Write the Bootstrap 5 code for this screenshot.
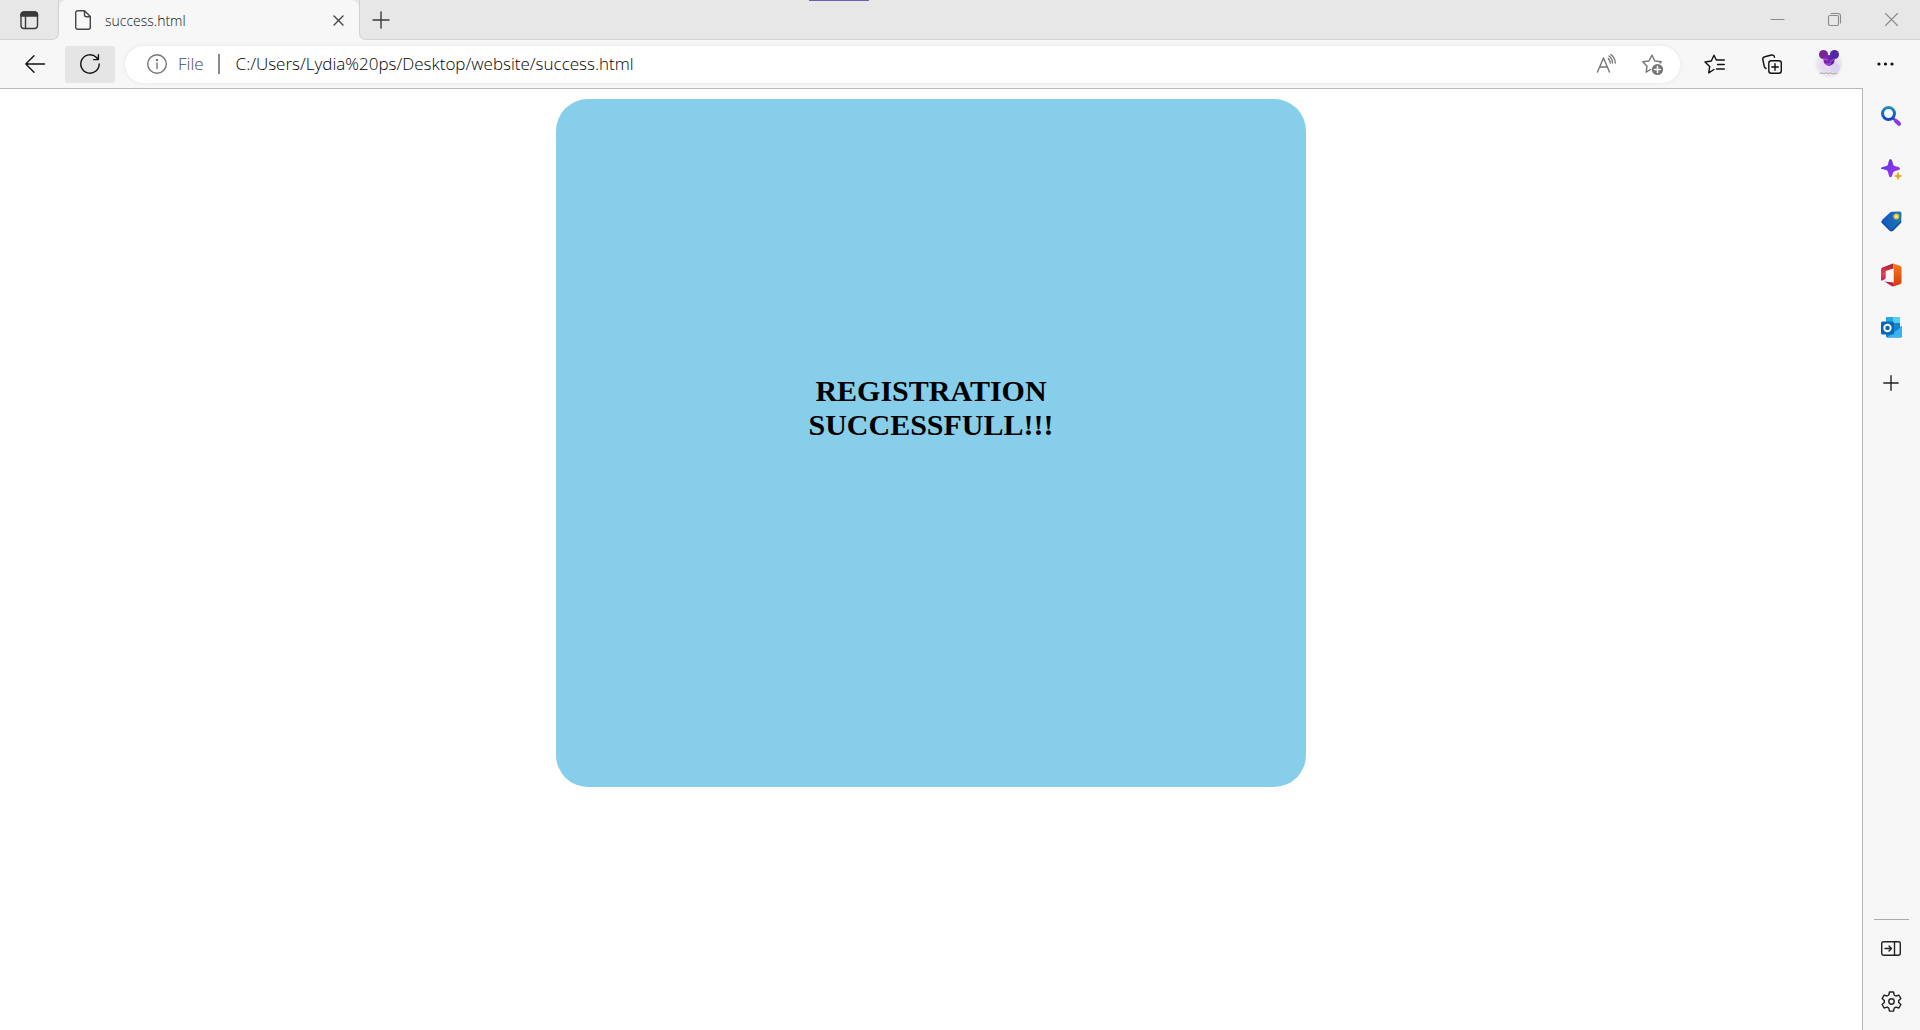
<!DOCTYPE html>
<html lang="en">
<head>
<meta charset="utf-8">
<meta name="viewport" content="width=device-width, initial-scale=1">
<title>success.html</title>
<link href="https://cdn.jsdelivr.net/npm/bootstrap@5.3.0/dist/css/bootstrap.min.css" rel="stylesheet">
<style>
  body { background: #fff; font-family: "Open Sans", "Noto Sans", sans-serif; color: #111; }
  svg { display: block; fill: none; stroke: currentColor; stroke-width: 1.4; stroke-linecap: round; stroke-linejoin: round; overflow: visible; }
  svg.art { stroke: none; }
  button.flat { background: none; border: 0; padding: 0; color: inherit; display: flex; align-items: center; justify-content: center; flex: none; }
  .tabstrip { background: #e7e7e7; height: 40px; color: #3a3a3a; }
  .tabstrip .strip-end { border-bottom: 1px solid #d2d2d2; }
  .under-tab { background: #f7f7f7; }
  button.tab-actions { width: 59px; background: #e7e7e7; border: 0 solid #d2d2d2; border-width: 0 1px 1px 0; border-radius: 0 0 7px 0; }
  .tab-open { width: 300px; background: #f7f7f7; border-radius: 8px 8px 0 0; padding: 0 11px 0 16px; font-size: 14px; color: #444; font-weight: 300; gap: 14px; }
  .tab-open .tab-title { color: #111; }
  .strip-end { background: #e7e7e7; border-left: 1px solid #d2d2d2; border-radius: 0 0 0 7px; }
  .btn-newtab { width: 42px; }
  .tabstrip .btn-win { width: 57px; color: #8a8a8a; }
  .tabstrip .btn-win svg { stroke-width: 1.1; }
  .drag-mark { top: 0; left: 809px; width: 60px; height: 1px; background: #6a60b0; }
  .toolbar { background: #f7f7f7; height: 48px; padding: 0 6px 0 10px; }
  .toolbar .btn-nav { width: 50px; height: 37px; border-radius: 2px; }
  .toolbar .btn-reload { background: #e5e5e5; margin-left: 5px; }
  .toolbar .btn-tool { width: 57px; height: 37px; }
  .address { height: 37px; margin: 0 6px 0 10px; padding: 0 5px 0 22px; background: #fff; border-radius: 19px; box-shadow: 0 0 4px #e4e4e4; color: #767676; font-size: 17px; font-weight: 300; }
  .address .scheme { margin-left: 11px; color: #4a4a4a; }
  .address .divider { width: 2px; height: 20px; background: #8a8a8a; margin: 0 16px 0 14px; }
  .address input { border: 0; outline: 0; padding: 0; background: none; color: #000; font-weight: 300; font-size: 17px; min-width: 0; }
  .address .btn-in { width: 46px; height: 37px; }
  .page { border-top: 1px solid #b8b8b8; padding: 10px 8px; }
  .panel { background: #87ceeb; width: 750px; max-width: 100%; border-radius: 32px; padding: 275px 240px 345px; }
  .panel h1 { font: bold 30px/34px "Liberation Serif", serif; color: #000; margin: 0; }
  .sidebar { width: 58px; background: #f7f7f7; border-left: 1px solid #b8b8b8; padding: 1px 1px 2px 0; color: #222; }
  .sidebar .btn-side { width: 56px; height: 53px; }
  .sidebar hr { width: 35px; margin: 0 0 2px; color: #aaa; opacity: 1; }
  .sidebar .btn-add { margin-top: 2px; }
</style>
<script src="https://cdn.jsdelivr.net/npm/bootstrap@5.3.0/dist/js/bootstrap.bundle.min.js"></script>
</head>
<body>
<div class="d-flex flex-column min-vh-100">
  <header>
    <div class="tabstrip d-flex position-relative">
      <span class="drag-mark position-absolute"></span>
      <div class="under-tab d-flex">
        <button class="flat tab-actions" aria-label="Tab actions menu"><svg width="18" height="18"><rect x="1" y="1" width="16.5" height="16.5" rx="3"/><path d="M1 5V4a3 3 0 0 1 3-3h10.500a3 3 0 0 1 3 3v1z" fill="currentColor"/><path d="M5.500 5v12"/></svg></button>
      </div>
      <div class="tab-open d-flex align-items-center">
        <svg width="16" height="20"><path d="M3 .7h6.500L15.300 6.500v10.800a2 2 0 0 1-2 2H2.700a2 2 0 0 1-2-2V2.700a2 2 0 0 1 2-2zM9.500 .7v4a2 2 0 0 0 2 2h3.800"/></svg>
        <span class="tab-title flex-grow-1">success.html</span>
        <button class="flat px-1" aria-label="Close tab"><svg width="11" height="11"><path d="M1 1l9 9M10 1l-9 9"/></svg></button>
      </div>
      <div class="under-tab d-flex flex-grow-1">
        <div class="strip-end d-flex flex-grow-1">
          <button class="flat btn-newtab" aria-label="New tab"><svg width="18" height="18"><path d="M9 1v16M1 9h16"/></svg></button>
          <div class="d-flex ms-auto">
            <button class="flat btn-win" aria-label="Minimize"><svg width="13" height="13"><path d="M0 6.500h13"/></svg></button>
            <button class="flat btn-win" aria-label="Restore"><svg width="13" height="13"><rect x=".5" y="2.500" width="10" height="10" rx="1.500"/><path d="M3 .5h7a2.500 2.500 0 0 1 2.500 2.500v7"/></svg></button>
            <button class="flat btn-win" aria-label="Close"><svg width="13" height="13"><path d="M.5 .5l12 12M12.500 .5l-12 12"/></svg></button>
          </div>
        </div>
      </div>
    </div>
    <div class="toolbar d-flex align-items-center">
      <button class="flat btn-nav" aria-label="Back"><svg width="20" height="18"><path d="M19.500 9H.8M9 .8L.8 9 9 17.200"/></svg></button>
      <button class="flat btn-nav btn-reload" aria-label="Reload"><svg width="20" height="20"><path d="M19.200 10a9.200 9.200 0 1 1-2.700-6.500l1.700 2M18.400 .8v4.800h-4.800"/></svg></button>
      <div class="address d-flex align-items-center flex-grow-1">
        <svg width="20" height="20"><circle cx="10" cy="10" r="9.300"/><path d="M10 9v5.500"/><circle cx="10" cy="6" r=".5" fill="currentColor"/></svg>
        <label class="scheme" for="url">File</label>
        <span class="divider"></span>
        <input id="url" class="flex-grow-1" type="text" value="C:/Users/Lydia%20ps/Desktop/website/success.html">
        <button class="flat btn-in" aria-label="Read aloud"><svg width="20" height="20"><path d="M1.500 18L7.500 4l6 14M3.700 13h7.600M12.300 4.500a8 8 0 0 1 2 4.500M13 2a9 9 0 0 1 3.500 7M14.800 .5a11 11 0 0 1 4.500 8.500"/></svg></button>
        <button class="flat btn-in" aria-label="Add to favorites"><svg width="21" height="21"><path d="M8.500 15.500L4.200 18.200l.8-6L.8 7.800l6-.8L10 1.200 12.800 7l6.400.8-1 1.200"/><circle cx="15.500" cy="15.500" r="5.600" fill="currentColor" stroke="none"/><path d="M15.500 12.500v6M12.500 15.500h6" stroke="#fff" stroke-width="1.500"/></svg></button>
      </div>
      <button class="flat btn-tool" aria-label="Favorites"><svg width="21" height="20"><path d="M10 15.500L4.700 18.800 5.700 12.500 1 8l6.300-1L10 1.200 12.300 6h8M13.500 10.500h6.800M12.500 15h7.800"/></svg></button>
      <button class="flat btn-tool" aria-label="Collections"><svg width="20" height="20"><rect x="6.800" y="6.800" width="12.500" height="12.500" rx="2.500"/><path d="M13 9.800v6.500M9.800 13h6.500M4 14.500A3 3 0 0 1 2.300 12.500L.8 5.500A2.500 2.500 0 0 1 2.800 2.700L9.500 1A2.500 2.500 0 0 1 12.500 3.200"/></svg></button>
      <button class="flat btn-tool" aria-label="Profile"><svg class="art" width="28" height="30"><defs><radialGradient id="halo"><stop offset=".5" stop-color="#e5daf0"/><stop offset=".85" stop-color="#e9e8f0"/><stop offset="1" stop-color="#f2f2f4"/></radialGradient><linearGradient id="mouse"><stop stop-color="#8a25b5"/><stop offset="1" stop-color="#4926a5"/></linearGradient></defs><circle cx="14" cy="15" r="14" fill="url(#halo)"/><circle cx="20" cy="19" r="5" fill="#d7d4f2"/><circle cx="8.500" cy="5.500" r="4.500" fill="#752491"/><circle cx="19.500" cy="5.500" r="4.500" fill="#5029a5"/><path d="M8 8q6-4 12 0l-1 6q-5 6-10 0z" fill="url(#mouse)"/><path d="M9 10l4 1M15 13l4-3M11 15h5" stroke="#ce55e4" stroke-width="1"/><path d="M5 24.500l2-.8 2 1 2-1 2 1 3-.8 2 1 4-.6" stroke="#b5a2a7" stroke-width="1"/></svg></button>
      <button class="flat btn-tool" aria-label="Settings and more"><svg class="art" width="17" height="4"><g fill="currentColor"><circle cx="2" cy="2" r="1.600"/><circle cx="8.500" cy="2" r="1.600"/><circle cx="15" cy="2" r="1.600"/></g></svg></button>
    </div>
  </header>
  <div class="d-flex flex-grow-1">
    <main class="page flex-grow-1">
      <section class="panel mx-auto text-center"><h1>REGISTRATION SUCCESSFULL!!!</h1></section>
    </main>
    <aside class="sidebar d-flex flex-column align-items-center flex-shrink-0">
      <button class="flat btn-side" aria-label="Search"><svg class="art" width="20" height="20"><defs><linearGradient id="lens" x2="0" y2="1"><stop stop-color="#258bc4"/><stop offset="1" stop-color="#1545c8"/></linearGradient></defs><path d="M12 12l2.500 2.500" stroke="#4b4fa8" stroke-width="2.500"/><circle cx="7.500" cy="7.500" r="6" fill="#f5faff" stroke="url(#lens)" stroke-width="3"/><path d="M15 15l3 2.800" stroke="#8938e5" stroke-width="4"/></svg></button>
      <button class="flat btn-side" aria-label="Discover"><svg class="art" width="20" height="22"><defs><linearGradient id="spark" x2="1" y2="1"><stop stop-color="#5a35dc"/><stop offset="1" stop-color="#a435f5"/></linearGradient></defs><path d="M9.500 1q1 0 1.500 1.500l1.300 4.200q.3 1 1.200 1.300l4 1q1.500.5 1.500 1.500t-1.500 1.500l-4 1.200q-.9.300-1.200 1.200L11 17.700q-.5 1.500-1.500 1.500T8 17.700l-1.200-4.300q-.3-.9-1.200-1.200l-4-1.200Q0 11.500 0 10.500T1.600 9l4-1q.9-.3 1.200-1.300L8 2.500Q8.500 1 9.500 1z" fill="url(#spark)"/><path d="M17 13.500l1.300 3.200 3.200 1.300-3.200 1.300L17 22.500l-1.300-3.200-3.200-1.300 3.200-1.300z" fill="#dfaa27"/></svg></button>
      <button class="flat btn-side" aria-label="Shopping"><svg class="art" width="21" height="21"><defs><linearGradient id="tagfill" x2="1" y2="0"><stop stop-color="#1553c5"/><stop offset="1" stop-color="#1d7bad"/></linearGradient></defs><path d="M11 .8l7.500-.3q2 0 2 2l-.2 7.800q0 1-.8 1.800l-7.300 7.300q-1.700 1.700-3.400 0L1.300 12q-1.700-1.500 0-3.300L9 1.600q.8-.8 2-.8z" fill="url(#tagfill)"/><path d="M1 11l7.700 7.700q1.700 1.700 3.400 0l7.500-7.500" stroke="#124aaa"/><circle cx="15.300" cy="5.500" r="2.300" fill="#f8edab" stroke="#d9ba42"/></svg></button>
      <button class="flat btn-side" aria-label="Office"><svg class="art" width="21" height="24"><defs><linearGradient id="offl" x2="0" y2="1"><stop stop-color="#9f202c"/><stop offset=".6" stop-color="#e5415b"/><stop offset="1" stop-color="#c01e53"/></linearGradient><linearGradient id="offr" x2="0" y2="1"><stop stop-color="#f27b1b"/><stop offset="1" stop-color="#d8390d"/></linearGradient></defs><path d="M12 .5L1.500 4.600Q0 5.200 0 7v9.500q0 1.500 1.200 1l2.500-1.200q1-.5 1-1.700V8l8-2.500z" fill="url(#offl)"/><path d="M12 .5l7 2.200q1.500.5 1.500 2v14.600q0 1.500-1.500 2l-7 2.200.7-4V5z" fill="url(#offr)"/><path d="M3.500 18.500l9.200 1v2.300q0 2-1.700 1.500z" fill="#b51f49"/></svg></button>
      <button class="flat btn-side" aria-label="Outlook"><svg class="art" width="21" height="21"><rect x="5" y="0" width="14" height="18" rx="1.500" fill="#1685d0"/><path d="M12 0h6q1 0 1 1v5h-7z" fill="#50d2f5"/><path d="M5 1q0-1 1-1h6v6H5z" fill="#28a8e5"/><path d="M5 9l8 5 8-5v10q0 1.500-1.500 1.500H6.500Q5 20.500 5 19z" fill="#1781ca"/><path d="M21 9.500L6 20.500h13.500q1.500 0 1.500-1.500z" fill="#35b5ee"/><rect x="0" y="4.500" width="13" height="13" rx="1.500" fill="#0a66b8"/><circle cx="6.500" cy="11" r="3.200" stroke="#fff" stroke-width="1.900"/></svg></button>
      <button class="flat btn-side btn-add" aria-label="Customize"><svg width="16" height="16"><path d="M8 .8v14.400M.8 8h14.400"/></svg></button>
      <hr class="mt-auto">
      <button class="flat btn-side" aria-label="Hide sidebar"><svg width="20" height="15"><rect x=".7" y=".7" width="18.600" height="13.600" rx="2"/><path d="M13.500 .7v13.600M4 7.500h6.500M8 5l2.500 2.500L8 10"/></svg></button>
      <button class="flat btn-side" aria-label="Settings"><svg width="21" height="21"><path d="M8.500 1h4l.7 3 1.700 1 3-.9 2 3.500-2.200 2v1.900l2.200 2-2 3.500-3-.9-1.700 1-.7 3h-4l-.7-3-1.700-1-3 .9-2-3.500 2.200-2V9.600l-2.200-2 2-3.500 3 .9 1.700-1z"/><circle cx="10.500" cy="10.500" r="2.700"/></svg></button>
    </aside>
  </div>
</div>
</body>
</html>
